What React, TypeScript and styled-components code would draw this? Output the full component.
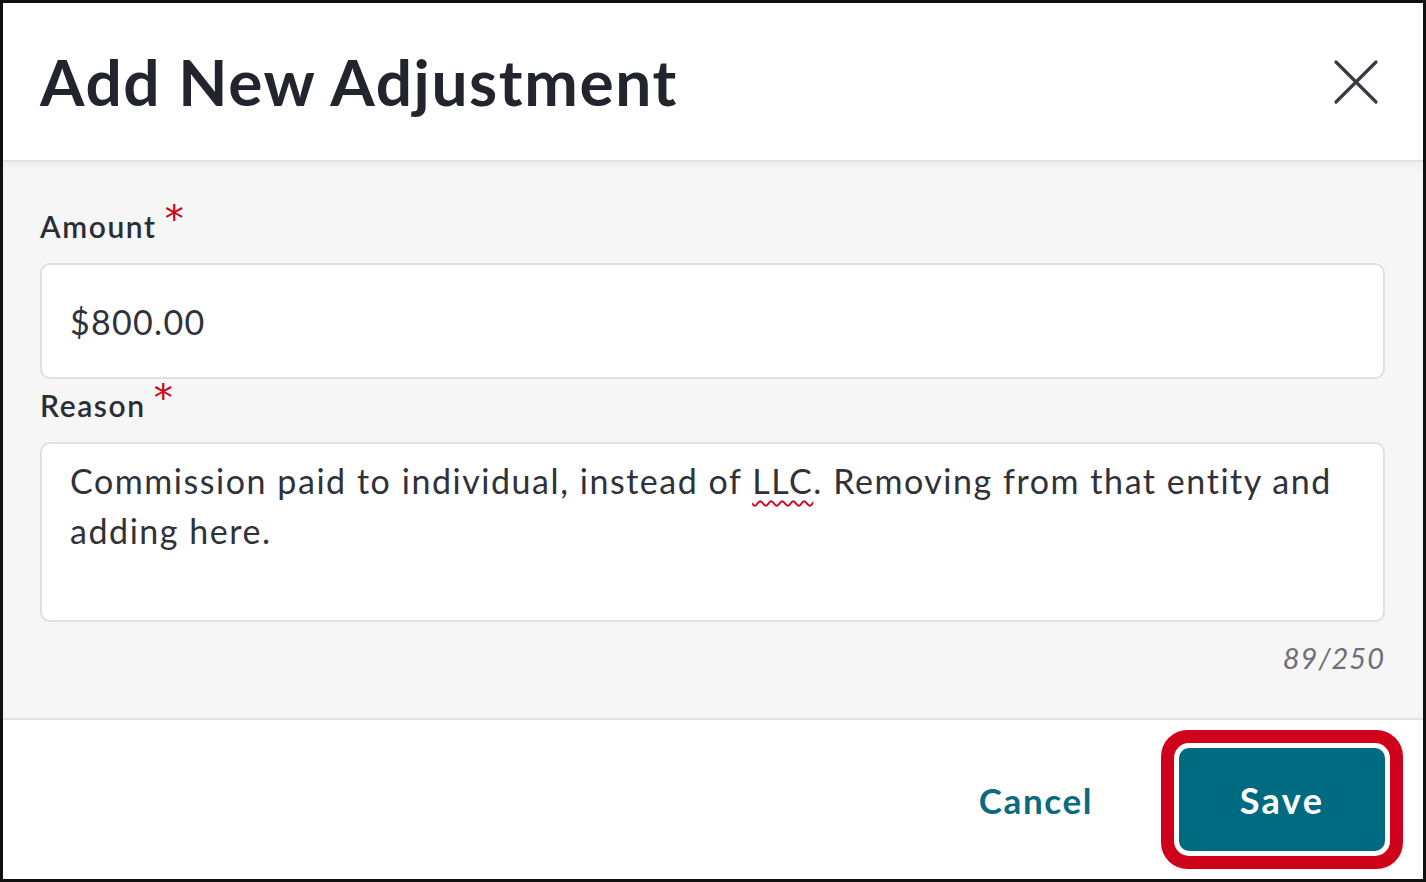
import styled, { createGlobalStyle } from 'styled-components'

const GlobalStyle = createGlobalStyle`
  html, body {
    margin: 0;
    padding: 0;
    background: #ffffff;
  }
  * {
    box-sizing: border-box;
  }
`

const Close = () => (
    <svg width="46" height="46" viewBox="0 0 46 46" fill="none">
        <path d="M3 3L43 43M43 3L3 43" stroke="#373a42" strokeWidth="3.2" strokeLinecap="round" />
    </svg>
)

const App = () => {
    return (
        <>
            <GlobalStyle />
            <Modal>
                <Header>
                    <Title>Add New Adjustment</Title>
                    <CloseButton aria-label="Close">
                        <Close />
                    </CloseButton>
                </Header>

                <Body>
                    <Field>
                        <Label>Amount<Required>*</Required></Label>
                        <Input defaultValue="$800.00" readOnly />
                    </Field>

                    <Field>
                        <Label>Reason<Required>*</Required></Label>
                        <TextBox role="textbox">
                            Commission paid to individual, instead of <Misspelled>LLC</Misspelled>. Removing from that entity and adding here.
                        </TextBox>
                    </Field>

                    <Counter>89/250</Counter>
                </Body>

                <Footer>
                    <CancelButton>Cancel</CancelButton>
                    <SaveButton>Save</SaveButton>
                </Footer>
            </Modal>
        </>
    )
}

export default App


const Modal = styled.div`
width: 1426px;
height: 882px;
border: 3px solid #111;
display: flex;
flex-direction: column;
background: #fff;
font-family: Lato, "Noto Sans", sans-serif;
color: #2a2d35;
`

const Header = styled.div`
height: 159px;
flex-shrink: 0;
display: flex;
align-items: center;
justify-content: space-between;
padding: 0 44px 0 37px;
border-bottom: 2px solid #e3e3e3;
position: relative;
z-index: 1;
box-shadow: 0 4px 10px rgba(0, 0, 0, 0.04);
`

const Title = styled.h1`
margin: 0;
font-size: 64px;
font-weight: 700;
color: #22252d;
letter-spacing: 1.6px;
`

const CloseButton = styled.button`
border: none;
background: transparent;
padding: 0;
display: flex;
cursor: pointer;
`

const Body = styled.div`
flex: 1;
background: #f6f6f6;
padding: 47px 38px 0 37px;
display: flex;
flex-direction: column;
border-bottom: 2px solid #e3e3e3;
`

const Field = styled.div`
display: flex;
flex-direction: column;
& + & {
    margin-top: 9px;
}
`

const Label = styled.label`
display: flex;
align-items: flex-start;
font-size: 30px;
line-height: 35px;
font-weight: 600;
letter-spacing: 1.6px;
color: #2a2d35;
margin-bottom: 19px;
`

const Required = styled.span`
color: #d0021b;
font-family: "DejaVu Sans", sans-serif;
font-size: 38px;
line-height: 30px;
font-weight: 400;
letter-spacing: 0;
margin-left: 8px;
margin-top: -5px;
`

const Input = styled.input`
height: 116px;
width: 100%;
border: 2px solid #e0e0e0;
border-radius: 10px;
background: #fff;
padding: 0 28px;
font-family: inherit;
font-size: 34px;
letter-spacing: 1.3px;
color: #2f323a;
outline: none;
`

const TextBox = styled.div`
height: 180px;
border: 2px solid #e0e0e0;
border-radius: 10px;
background: #fff;
padding: 12px 28px;
font-size: 34px;
line-height: 50px;
letter-spacing: 1.55px;
color: #2f323a;
`

const Misspelled = styled.span`
text-decoration: underline wavy #d0021b;
text-decoration-thickness: 1.5px;
text-underline-offset: 6px;
`

const Counter = styled.div`
align-self: flex-end;
margin-top: 19px;
font-size: 29px;
line-height: 34px;
font-style: italic;
letter-spacing: 1px;
color: #6d7078;
`

const Footer = styled.div`
flex: 0 0 159px;
display: flex;
align-items: center;
justify-content: flex-end;
gap: 86px;
padding: 0 38px 0 37px;
background: #fff;
`

const CancelButton = styled.button`
border: none;
background: transparent;
padding: 0;
font-family: inherit;
font-size: 35px;
font-weight: 700;
letter-spacing: 1.6px;
color: #0b6a80;
cursor: pointer;
`

const SaveButton = styled.button`
width: 206px;
height: 103px;
border: none;
border-radius: 10px;
background: #006a80;
color: #fff;
font-family: inherit;
font-size: 36px;
font-weight: 700;
letter-spacing: 2.4px;
cursor: pointer;
box-shadow: 0 0 0 5px #fff, 0 0 0 18px #d0021b;
`
